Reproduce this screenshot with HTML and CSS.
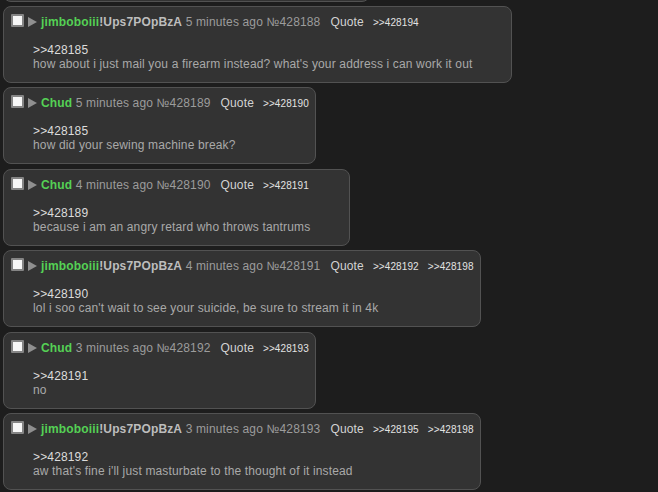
FILE: index.html
```html
<!DOCTYPE html>
<html>
<head>
<meta charset="utf-8">
<link rel="stylesheet" href="styles.css">
</head>
<body>
<div class="thread">
  <div class="post prev"></div>

  <div class="post">
    <div class="head">
      <span class="check"></span><span class="tri"></span>
      <div class="info"><span class="name">jimboboiii</span><span class="trip">!Ups7POpBzA</span> 5 minutes ago №428188<span class="quote">Quote</span><span class="back">&gt;&gt;428194</span></div>
    </div>
    <div class="msg"><div class="ql">&gt;&gt;428185</div><div>how about i just mail you a firearm instead? what's your address i can work it out</div></div>
  </div>

  <div class="post">
    <div class="head">
      <span class="check"></span><span class="tri"></span>
      <div class="info"><span class="name">Chud</span> 5 minutes ago №428189<span class="quote">Quote</span><span class="back">&gt;&gt;428190</span></div>
    </div>
    <div class="msg"><div class="ql">&gt;&gt;428185</div><div>how did your sewing machine break?</div></div>
  </div>

  <div class="post">
    <div class="head">
      <span class="check"></span><span class="tri"></span>
      <div class="info"><span class="name">Chud</span> 4 minutes ago №428190<span class="quote">Quote</span><span class="back">&gt;&gt;428191</span></div>
    </div>
    <div class="msg"><div class="ql">&gt;&gt;428189</div><div>because i am an angry retard who throws tantrums</div></div>
  </div>

  <div class="post">
    <div class="head">
      <span class="check"></span><span class="tri"></span>
      <div class="info"><span class="name">jimboboiii</span><span class="trip">!Ups7POpBzA</span> 4 minutes ago №428191<span class="quote">Quote</span><span class="back">&gt;&gt;428192</span><span class="back">&gt;&gt;428198</span></div>
    </div>
    <div class="msg"><div class="ql">&gt;&gt;428190</div><div>lol i soo can't wait to see your suicide, be sure to stream it in 4k</div></div>
  </div>

  <div class="post">
    <div class="head">
      <span class="check"></span><span class="tri"></span>
      <div class="info"><span class="name">Chud</span> 3 minutes ago №428192<span class="quote">Quote</span><span class="back">&gt;&gt;428193</span></div>
    </div>
    <div class="msg"><div class="ql">&gt;&gt;428191</div><div>no</div></div>
  </div>

  <div class="post">
    <div class="head">
      <span class="check"></span><span class="tri"></span>
      <div class="info"><span class="name">jimboboiii</span><span class="trip">!Ups7POpBzA</span> 3 minutes ago №428193<span class="quote">Quote</span><span class="back">&gt;&gt;428195</span><span class="back">&gt;&gt;428198</span></div>
    </div>
    <div class="msg"><div class="ql">&gt;&gt;428192</div><div>aw that's fine i'll just masturbate to the thought of it instead</div></div>
  </div>
</div>
</body>
</html>
```

FILE: styles.css
```css
html, body {
  margin: 0;
  padding: 0;
  background: #1d1d1d;
  height: 100%;
  overflow: hidden;
}

body {
  font-family: "Liberation Sans", Arial, sans-serif;
  font-size: 12px;
  line-height: 14px;
  letter-spacing: 0.15px;
  color: #a9a9a9;
}

.thread {
  display: flex;
  flex-direction: column;
  align-items: flex-start;
  padding-left: 3px;
}

.post {
  box-sizing: border-box;
  width: fit-content;
  background: #333333;
  border: 1px solid #525252;
  border-radius: 8px;
  padding: 7px 6px 11px 7px;
  margin-bottom: 4.4px;
}

.post.prev {
  width: 367px;
  height: 40px;
  margin-top: -38.4px;
  padding: 0;
}

.head {
  display: flex;
  align-items: flex-start;
  white-space: nowrap;
  height: 15px;
}

.check {
  box-sizing: border-box;
  width: 13px;
  height: 13px;
  background: #f7f7f7;
  border: 2px solid #858585;
  border-radius: 1px;
  flex: none;
}

.tri {
  width: 0;
  height: 0;
  margin: 3px 0 0 4px;
  border-left: 9px solid #8f8f8f;
  border-top: 5px solid transparent;
  border-bottom: 5px solid transparent;
  flex: none;
}

.info {
  margin: 1px 0 0 4px;
  height: 14px;
  color: #9c9c9c;
}

.name {
  color: #55d155;
  font-weight: bold;
}

.trip {
  color: #bdbdbd;
  font-weight: bold;
}

.quote {
  color: #d2d2d2;
  margin-left: 10px;
}

.back {
  color: #e2e2e2;
  font-size: 10px;
  line-height: 10px;
  letter-spacing: 0.1px;
  margin-left: 9px;
}

.back + .back {
  margin-left: 9px;
}

.msg {
  margin: 14px 33px 0 22px;
  white-space: nowrap;
}

.ql {
  color: #dcdcdc;
}
```
